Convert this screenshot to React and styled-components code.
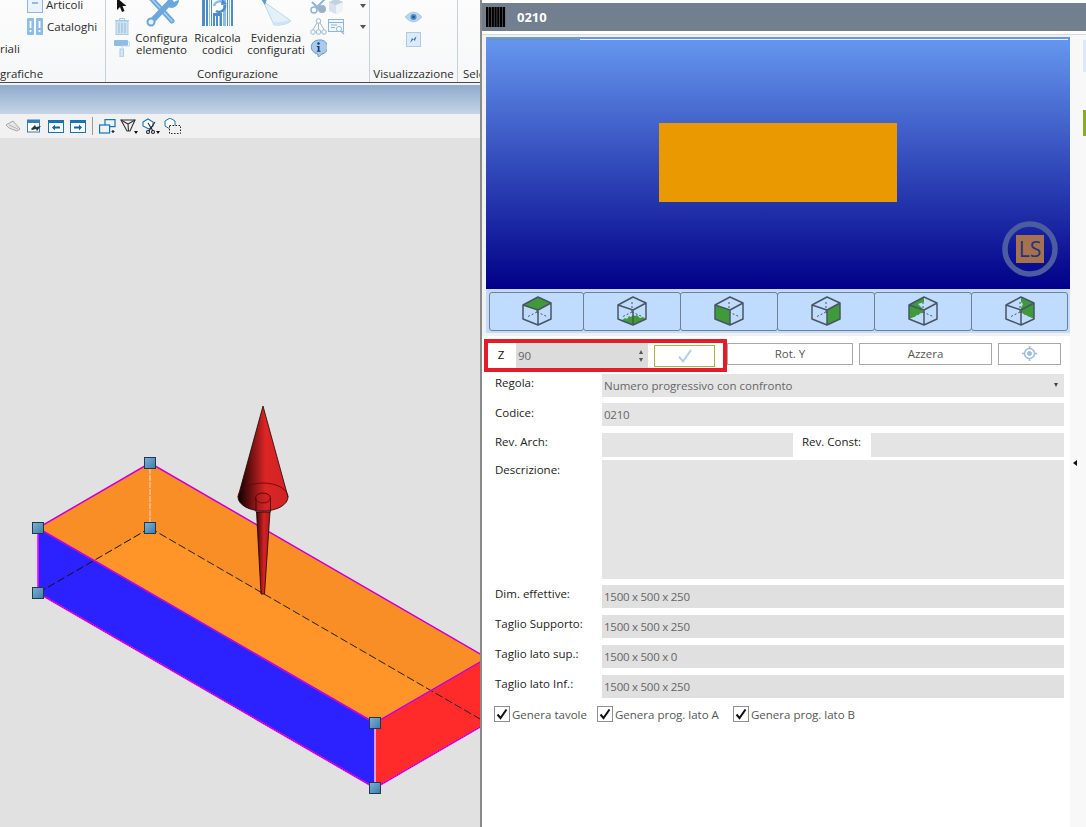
import React from "react";
import styled, { createGlobalStyle } from "styled-components";

const Global = createGlobalStyle`
  html, body { margin: 0; padding: 0; background: #fff; }
  body { font-family: "Open Sans", "Noto Sans", sans-serif; font-size: 11.5px; color: #222; }
  * { box-sizing: border-box; }
`;

const Page = styled.div`
  display: flex; width: 1086px; height: 827px; overflow: hidden; background: #fff;
`;
const LeftPane = styled.div`
  width: 480px; flex: none; display: flex; flex-direction: column; overflow: hidden;
`;
const Ribbon = styled.div`
  height: 83px; flex: none; display: flex; overflow: hidden;
  background: linear-gradient(#fcfcfc, #f6f7f8);
  border-bottom: 1px solid #4a4a4a;
`;
const Group = styled.div`
  width: ${p => p.$w}px; flex: none; display: flex; flex-direction: column;
  border-right: ${p => (p.$last ? "none" : "1px solid #c9d0d8")};
  overflow: hidden; height: 82px;
`;
const GroupBody = styled.div`
  height: 64px; display: flex; gap: ${p => p.$gap || 0}px; padding-left: ${p => p.$pl || 0}px;
  margin-top: ${p => p.$mt || 0}px; flex: none;
`;
const GroupLabel = styled.div`
  margin-top: auto; height: 16px; line-height: 16px;
  text-align: ${p => p.$align || "center"}; padding-left: ${p => p.$pl || 0}px; white-space: nowrap;
  color: #2b2b2b;
`;
const CutColumn = styled.div`
  width: 27px; flex: none; padding-top: 44px; line-height: 22px; color: #2b2b2b;
`;
const ListColumn = styled.div`display: flex; flex-direction: column;`;
const ListItem = styled.div`
  height: 21.5px; display: flex; align-items: center; gap: 3px; color: #2b2b2b; white-space: nowrap;
`;
const SmallColumn = styled.div`
  width: 18px; flex: none; display: flex; flex-direction: column; align-items: center;
`;
const SmallCell = styled.div`
  height: 21.5px; display: flex; align-items: center; justify-content: center;
`;
const LargeButton = styled.div`
  width: ${p => p.$w}px; flex: none; display: flex; flex-direction: column; align-items: center;
  color: #2b2b2b; line-height: 12px; text-align: center; white-space: nowrap;
`;
const LargeIcon = styled.div`height: 37px; flex: none;`;
const SmallGrid = styled.div`
  display: grid; grid-template-columns: 18px 18px 24px; grid-auto-rows: 21px; align-items: center; justify-items: center;
`;
const Caret = styled.span`
  width: 0; height: 0; border-left: 3.5px solid transparent; border-right: 3.5px solid transparent;
  border-top: 4px solid #555; justify-self: end; margin-right: 3px;
`;
const ViewColumn = styled.div`
  width: 100%; display: flex; flex-direction: column; align-items: center; gap: 9px; padding-top: 11px;
`;
const Band = styled.div`
  height: 31px; flex: none; background: linear-gradient(#8fabcc, #c4d5e7); border-top: 2px solid #eef2f6;
`;
const Toolbar = styled.div`
  height: 24px; flex: none; background: #f1f1f1; display: flex; align-items: center; gap: 6px; padding-left: 5px;
`;
const ToolGroup = styled.div`display: flex; align-items: center; gap: 4px;`;
const ToolSep = styled.div`width: 1px; height: 18px; background: #9a9a9a;`;
const Canvas = styled.div`
  flex: 1; background: #e1e1e1; overflow: hidden; position: relative;
`;
const CanvasSvg = styled.svg`display: block;`;

const RightPane = styled.div`
  flex: 1; display: flex; flex-direction: column; border-left: 2px solid #8a8a8a; background: #fff; min-width: 0;
`;
const TitleBar = styled.div`
  margin-top: 3px; height: 28px; flex: none; background: #727f8e; display: flex; align-items: center;
  gap: 11px; padding-left: 4px; color: #fff; font-weight: 700; font-size: 13px;
`;
const PaneBody = styled.div`
  flex: 1; display: flex; border-top: 1px solid #d9d9d9; margin-top: 3px; min-height: 0;
`;
const MainColumn = styled.div`
  width: 588px; flex: none; display: flex; flex-direction: column;
`;
const ViewerWrap = styled.div`
  background: #f1f1f1; padding: 2px 0 3px 4px;
`;
const Viewer = styled.div`
  position: relative; height: 252px; width: 584px;
  background: linear-gradient(#6698ef, #000088);
  display: flex; align-items: center; justify-content: center;
`;
const ViewerLine = styled.div`
  position: absolute; left: 1px; right: 2px; top: 2px; height: 1px;
  background: linear-gradient(90deg, #6f9a8c 0, #6f9a8c 16%, #eef4ff 16%, #eef4ff 100%);
`;
const Slab = styled.div`
  width: 238px; height: 79px; background: #ea9a00; transform: translateY(-1px);
`;
const LogoSvg = styled.svg`
  position: absolute; right: 12px; bottom: 12px;
`;
const CubeStrip = styled.div`
  background: #c3dcfb; height: 44px; width: 584px; display: flex; align-items: center; padding: 0 0 0 4px; margin-top: -5px;
`;
const CubeButton = styled.div`
  width: ${p => p.$w}px; height: 39px; flex: none; background: #bfdcff; border: 1px solid #6f7f95; border-radius: 3px;
  display: flex; align-items: center; justify-content: center; margin-left: -1px;
`;
const FormArea = styled.div`
  display: flex; flex-direction: column; padding-top: 3px;
`;
const ActionRow = styled.div`
  display: flex; height: 33px; align-items: center; margin-bottom: 2px; padding-left: 2px;
`;
const Highlight = styled.div`
  width: 243px; height: 33px; flex: none; border: 4px solid #e31b2b; display: flex; align-items: center; background: #fff;
`;
const AxisName = styled.div`width: 26px; flex: none; text-align: center; color: #111; transform: translateY(-1px); margin-right: 2px;`;
const SpinField = styled.div`
  width: 132px; height: 25px; flex: none; background: #dcdcdc; display: flex; align-items: center; justify-content: space-between;
  padding: 0 5px 0 2px; color: #666;
`;
const SpinArrows = styled.div`display: flex; flex-direction: column; gap: 4px;`;
const SpinUp = styled.span`
  display: block; width: 0; height: 0; border-left: 2.5px solid transparent; border-right: 2.5px solid transparent; border-bottom: 4px solid #555;
`;
const SpinDown = styled(SpinUp)`border-bottom: none; border-top: 4px solid #555;`;
const ApplyButton = styled.div`
  width: 61px; height: 22px; margin-left: 6px; flex: none; background: #fff; border: 1px solid #a8b44a; display: flex; align-items: center; justify-content: center;
`;
const PlainButton = styled.div`
  width: ${p => p.$w}px; margin-left: ${p => p.$ml || 0}px; height: 22px; flex: none; background: #fff; border: 1px solid #a9a9a9;
  display: flex; align-items: center; justify-content: center; color: #555; transform: translateY(-2px);
`;
const Row = styled.div`
  display: grid; grid-template-columns: 107px 1fr; padding: 0 6px 0 13px; margin-bottom: ${p => p.$mb ?? 7}px;
`;
const Label = styled.div`line-height: 18px; color: #222; white-space: nowrap; padding-top: ${p => p.$pt || 0}px;`;
const Field = styled.div`
  height: ${p => p.$h || 23}px; background: ${p => p.$bg || "#e4e4e4"}; color: #666; padding: 0 6px 1px 2px;
  width: ${p => (p.$w ? p.$w + "px" : "auto")}; flex: ${p => (p.$w ? "none" : "1")};
  letter-spacing: ${p => p.$tight ? "-0.25px" : "0"};
  display: flex; justify-content: space-between; align-items: center;
`;
const SelectCaret = styled.span`
  width: 0; height: 0; border-left: 2.5px solid transparent; border-right: 2.5px solid transparent; border-top: 4px solid #444;
`;
const RevCells = styled.div`display: flex;`;
const RevLabel = styled.div`width: 78px; flex: none; padding-left: 9px; line-height: 18px; white-space: nowrap;`;
const Checks = styled.div`display: flex; padding: 1px 0 0 12px;`;
const CheckItem = styled.div`
  display: flex; align-items: center; gap: 2px; color: #555; width: ${p => p.$w}px; flex: none; white-space: nowrap;
`;
const CheckBox = styled.div`
  width: 16px; height: 16px; border: 1px solid #8f8f8f; background: #fff; display: flex; align-items: center; justify-content: center; flex: none;
`;
const Rail = styled.div`
  flex: 1; background: #f8f8f8; display: flex; flex-direction: column; align-items: flex-end;
`;
const Accent = styled.div`
  width: 3px; height: ${p => p.$h}px; margin-top: ${p => p.$mt}px; background: ${p => p.$c};
`;
const RailArrow = styled.div`
  align-self: flex-start; margin: ${p => p.$mt}px 0 0 3px; width: 0; height: 0;
  border-top: 3.5px solid transparent; border-bottom: 3.5px solid transparent; border-right: 4px solid #111;
`;

const Barcode = () => (
  <svg width="20" height="20" viewBox="0 0 20 20" fill="#000">
    {[0, 2.8, 5.6, 8.4, 11.2, 14, 16.8].map((x, i) => (
      <rect key={i} x={x} y="0" width="2.300" height="20" />
    ))}
  </svg>
);

const DocIcon = () => (
  <svg width="16" height="16" viewBox="0 0 16 16">
    <rect x=".5" y=".5" width="15" height="15" fill="#eaf3fb" stroke="#8db8dc" />
    <path d="M5 6h6" stroke="#5c93c4" strokeWidth="1.2" />
  </svg>
);
const BooksIcon = () => (
  <svg width="17" height="17" viewBox="0 0 17 17">
    <rect x="0" y="0" width="7" height="17" rx="1" fill="#8dbde6" />
    <rect x="9" y="0" width="7" height="17" rx="1" fill="#8dbde6" />
    <rect x="2.6" y="3" width="1.8" height="7" fill="#fff" /><rect x="11.6" y="3" width="1.8" height="7" fill="#fff" />
    <rect x="2.6" y="12" width="1.8" height="2" fill="#fff" /><rect x="11.6" y="12" width="1.8" height="2" fill="#fff" />
  </svg>
);
const PointerIcon = () => (
  <svg width="12" height="16" viewBox="0 0 12 16"><path d="M1 0v12l3-3 2 5 2.500-1-2-5h4z" fill="#111" /></svg>
);
const TrashIcon = () => (
  <svg width="14" height="17" viewBox="0 0 14 17" fill="none" stroke="#a9cbe6">
    <path d="M0 2.500h14M4.500 2.500v-2h5v2" /><rect x="1" y="3" width="12" height="13.500" fill="#cfe2f2" />
    <path d="M4 5v10M7 5v10M10 5v10" stroke="#8db8dc" />
  </svg>
);
const RollerIcon = () => (
  <svg width="16" height="17" viewBox="0 0 16 17">
    <rect x="0" y="0" width="14" height="6" rx="1" fill="#8dbde6" />
    <path d="M14 2h1.500v4H8v2" fill="none" stroke="#c5d9ea" />
    <rect x="6" y="9" width="3.500" height="8" fill="#d6e6f3" stroke="#a9cbe6" />
  </svg>
);
const ToolsIcon = () => (
  <svg width="34" height="32" viewBox="0 0 34 32" fill="none" strokeLinecap="round">
    <path d="M4 1l23 25" stroke="#6aa7dc" strokeWidth="5" />
    <path d="M4 1l23 25" stroke="#a9cdec" strokeWidth="1.500" />
    <path d="M26 6L6 27" stroke="#6aa7dc" strokeWidth="5.500" />
    <circle cx="6" cy="27" r="3.500" fill="#eaf3fb" stroke="#6aa7dc" strokeWidth="2" />
    <path d="M33 3a7 7 0 0 1-9 9l-2-4 3-6 3-2" fill="#6aa7dc" stroke="#6aa7dc" />
    <path d="M29 -1l-3 4 3 4 4-2" fill="#fff" stroke="none" />
  </svg>
);
const RecalcIcon = () => (
  <svg width="31" height="32" viewBox="0 0 31 32">
    {[[0, 3, "#4d8ccb"], [4, 2, "#4d8ccb"], [7, 1, "#8dbde6"], [9, 1, "#4d8ccb"], [21, 3, "#8dbde6"], [25, 1, "#4d8ccb"], [27, 1, "#8dbde6"], [29, 2, "#4d8ccb"]].map(([x, w, c], i) => (
      <rect key={i} x={x} y="0" width={w} height="31" fill={c} />
    ))}
    <rect x="11" y="18" width="9" height="13" fill="#4d8ccb" />
    <rect x="13" y="21" width="1" height="10" fill="#fff" /><rect x="16" y="21" width="1.500" height="10" fill="#fff" />
    <path d="M12 11a6 6 0 0 1 10-3" fill="none" stroke="#8dbde6" strokeWidth="2.500" />
    <path d="M23 10a6 6 0 0 1-9 6" fill="none" stroke="#4d8ccb" strokeWidth="2.500" />
    <path d="M20 4l5 5-6 1z" fill="#4d8ccb" />
  </svg>
);
const BeamIcon = () => (
  <svg width="36" height="32" viewBox="0 0 36 32">
    <path d="M5 6L33 26q-6 5-17 4z" fill="#e4f0f9" stroke="#bcd7ec" />
    <path d="M16 30q10 1 17-4l-1-2q-7 4-16 3z" fill="#cfe3f3" />
    <path d="M3 4h6L7 10z" fill="#5c9ad2" />
  </svg>
);
const ScissorsIcon = () => (
  <svg width="18" height="16" viewBox="0 0 18 16" fill="none">
    <circle cx="5" cy="12" r="3" stroke="#8fb4d4" strokeWidth="1.500" />
    <circle cx="13" cy="11" r="4" fill="#9ab3c9" />
    <path d="M7 10l9-9M3 4l7 7" stroke="#8fb4d4" strokeWidth="2" />
  </svg>
);
const GrayCubeIcon = () => (
  <svg width="16" height="16" viewBox="0 0 16 16">
    <path d="M1 4l7-3 7 3v9l-7 3-7-3z" fill="#d7e2ec" /><path d="M8 7l7-3v9l-7 3z" fill="#eef3f8" /><path d="M1 4l7 3 7-3-7-3z" fill="#c0d1e0" />
  </svg>
);
const TreeIcon = () => (
  <svg width="17" height="17" viewBox="0 0 17 17" fill="none" stroke="#9db8cf">
    <circle cx="8.500" cy="3" r="2.300" /><circle cx="3" cy="14" r="2.300" /><circle cx="8.500" cy="14" r="2.300" /><circle cx="14" cy="14" r="2.300" />
    <path d="M8.500 5.500V11.500M7 5L3 11.500M10 5l4 6.500" />
  </svg>
);
const DocSearchIcon = () => (
  <svg width="17" height="17" viewBox="0 0 17 17" fill="none" stroke="#8db8dc">
    <rect x=".5" y="1.500" width="15" height="12" fill="#f1f6fb" /><path d="M.5 4.500h15" />
    <path d="M3 7h6M3 9.500h4" /><circle cx="11" cy="11" r="2.500" fill="#fff" /><path d="M13 13l3 3" strokeWidth="1.500" />
  </svg>
);
const InfoIcon = () => (
  <svg width="17" height="18" viewBox="0 0 17 18">
    <path d="M8.500 1a7.500 7 0 0 1 3 14.300L8.500 18l-1-3.100A7.500 7 0 0 1 8.500 1z" fill="#a9cbe9" stroke="#6b9ccb" />
    <circle cx="8.500" cy="4.500" r="1.200" fill="#123a73" /><path d="M6.800 7h2.700v4.800h1v1H6.800v-1h1V8H6.800z" fill="#123a73" />
  </svg>
);
const EyeIcon = () => (
  <svg width="17" height="12" viewBox="0 0 17 12">
    <path d="M0 6q8.500-10 17 0q-8.500 10-17 0z" fill="#b8d6ee" stroke="#8db8dc" strokeWidth=".5" />
    <circle cx="8.500" cy="6" r="3" fill="#4d8ccb" /><circle cx="8.500" cy="6" r="1.200" fill="#17508e" />
  </svg>
);
const FrameIcon = () => (
  <svg width="15" height="15" viewBox="0 0 15 15">
    <rect x=".5" y=".5" width="14" height="14" fill="#dcebf7" stroke="#a9cbe6" />
    <path d="M10.500 4L4 11l2-5 3 3z" fill="#3e76ad" />
  </svg>
);

const PlaneTool = () => (
  <svg width="16" height="12" viewBox="0 0 16 12">
    <path d="M1 5l7-4 7 8-3 2-8-3z" fill="#e6e6e6" stroke="#a8a8a8" /><path d="M4 5l9 4" stroke="#b5b5b5" />
  </svg>
);
const WindowTool = () => (
  <svg width="15" height="15" viewBox="0 0 15 15">
    <rect x=".5" y="1" width="12" height="12" fill="#fff" stroke="#2f7fc1" /><rect x=".5" y="1" width="12" height="3" fill="#2f7fc1" />
    <path d="M4 10l4-4 1 2 5-1-4 5-1-2-4 1z" fill="#333" />
  </svg>
);
const ArrowTool = ({ right }) => (
  <svg width="16" height="13" viewBox="0 0 16 13">
    <rect x=".5" y=".5" width="15" height="12" fill="#fff" stroke="#1573b8" /><rect x="1" y="1" width="14" height="2" fill="#1573b8" />
    <path d={right ? "M4 6.500h5V4.500l3 3-3 3V8.500H4z" : "M12 6.500H7V4.500l-3 3 3 3V8.500h5z"} fill="#14639e" />
  </svg>
);
const WindowsTool = () => (
  <svg width="17" height="15" viewBox="0 0 17 15" fill="none" stroke="#1573b8" strokeWidth="1.200">
    <rect x="6" y=".6" width="10" height="7" fill="#f1f1f1" /><rect x=".6" y="6" width="10" height="8" fill="#f1f1f1" />
    <path d="M14 11v3M12.500 12.500h3" stroke="#222" />
  </svg>
);
const FunnelTool = () => (
  <svg width="18" height="17" viewBox="0 0 18 17" fill="none" stroke="#333" strokeWidth="1.100">
    <path d="M1 2l14 0-5 11-3 0z" /><path d="M1 2l7 4 7-4M8 6l.5 7" />
    <path d="M14 13h4l-2 3z" fill="#111" stroke="none" />
  </svg>
);
const CutTool = () => (
  <svg width="18" height="17" viewBox="0 0 18 17" fill="none" stroke="#1573b8" strokeWidth="1.100">
    <path d="M1 4l5-3 5 3v4l-4 3-6-3z" fill="#fff" />
    <path d="M6 5l5 8M13 4l-6 9" stroke="#222" /><circle cx="6" cy="14" r="1.500" stroke="#222" /><circle cx="11" cy="14" r="1.500" stroke="#222" />
    <path d="M14 13h4l-2 3z" fill="#111" stroke="none" />
  </svg>
);
const SelectTool = () => (
  <svg width="17" height="16" viewBox="0 0 17 16" fill="none">
    <path d="M1 3l5-3 5 3v5l-5 3-5-3z" fill="#fff" stroke="#1573b8" />
    <rect x="5.500" y="7.500" width="11" height="8" fill="#f1f1f1" stroke="#222" strokeDasharray="1.500 1.500" />
  </svg>
);

const CUBE_FACES = {
  top: "M0 8L15 0L28 6L15 13Z",
  bottom: "M3 24L7 21L9 22L11 19L13 20L15 18L17 19L19 18L22 21L25 20L28 22L15 28Z",
  front: "M0 8L15 13V28L0 22Z",
  right: "M15 13L28 6V22L15 28Z",
  back: "M0 8L15 0V5L9 7L13 11L14 15L8 18L5 20L0 22Z",
  rear: "M15 0L28 6V22L22 19L18 17L14 15L15 11L17 7L15 5Z",
};
const Cube = ({ face }) => (
  <svg width="30" height="30" viewBox="-1 -1 30 30" fill="none">
    <path d="M14 15V4M14 15L4 20M14 15l11 5" stroke="#4a5563" strokeDasharray="2 2" />
    <path d={CUBE_FACES[face]} fill="#3f9a3a" />
    <path d="M0 8L15 0L28 6V22L15 28L0 22ZM0 8L15 13L28 6M15 13V28" stroke="#4a5563" strokeWidth="1.500" strokeLinejoin="round" />
  </svg>
);

const Check = ({ color = "#111", w = 12, sw = 2 }) => (
  <svg width={w} height={w} viewBox="0 0 12 12" fill="none">
    <path d="M1.500 6.500l3 3.500 6-8.500" stroke={color} strokeWidth={sw} />
  </svg>
);
const Target = () => (
  <svg width="15" height="15" viewBox="0 0 15 15" fill="none" stroke="#9dbde0">
    <circle cx="7.500" cy="7.500" r="5" strokeWidth="1.500" /><circle cx="7.500" cy="7.500" r="2" fill="#9dbde0" />
    <path d="M7.500 0v3M7.500 12v3M0 7.500h3M12 7.500h3" strokeWidth="1.500" />
  </svg>
);

const Handle = ({ x, y }) => (
  <rect x={x - 5.500} y={y - 5.500} width="11" height="11" fill="url(#handle)" stroke="#1f3a48" />
);

const Scene = () => (
  <CanvasSvg width="480" height="689" viewBox="0 138 480 689">
    <defs>
      <linearGradient id="handle" x1="0" y1="0" x2="1" y2="1"><stop offset="0" stopColor="#7fb2d8" /><stop offset="1" stopColor="#3d7ba8" /></linearGradient>
      <linearGradient id="cone" x1="0" y1="0" x2="1" y2="0"><stop offset="0" stopColor="#0a0202" /><stop offset=".25" stopColor="#6a1010" /><stop offset=".55" stopColor="#dd2525" /><stop offset="1" stopColor="#cf2323" /></linearGradient>
      <linearGradient id="stem" x1="0" y1="0" x2="1" y2="0"><stop offset="0" stopColor="#400808" /><stop offset=".55" stopColor="#d42222" /><stop offset="1" stopColor="#a81a1a" /></linearGradient>
    </defs>
    <path d="M150 463L38 528L375 723L487 658Z" fill="#f98e27" />
    <path d="M150 528L93 560L375 723L431 691Z" fill="#ff9428" />
    <path d="M38 528L375 723V788L38 593Z" fill="#2c22ff" />
    <path d="M375 723L487 658V723L375 788Z" fill="#ff2b2b" />
    <path d="M150 468V525" stroke="#ffb27a" strokeWidth="2" strokeDasharray="6 1" />
    <path d="M150 528L38 593" stroke="#111" strokeDasharray="8 3" />
    <path d="M150 528L487 723" stroke="#222" strokeDasharray="8 3" />
    <path d="M38 528L150 463L487 658L375 723L38 528ZM38 528V593L375 788L487 723" fill="none" stroke="#f0f" strokeWidth="1.600" />
    <path d="M38 528L150 463L487 658L375 723Z" fill="none" stroke="#50205a" strokeWidth=".5" />
    <path d="M38 593L375 788L487 723" fill="none" stroke="#401040" strokeWidth=".8" strokeDasharray="1 1.500" />
    <path d="M375 723V788" stroke="#ffb0ff" strokeWidth="1.600" />
    <path d="M263 406L238 497A25 14 0 0 0 288 497Z" fill="url(#cone)" stroke="#200" strokeWidth=".8" />
    <path d="M238 497A25 14 0 0 1 288 497" fill="none" stroke="#600" strokeWidth=".8" />
    <ellipse cx="263" cy="498" rx="7.500" ry="5" fill="#b82020" fillOpacity=".4" stroke="#400" strokeWidth=".8" />
    <path d="M256 498V512H270.500V498" fill="#b82020" fillOpacity=".25" stroke="#300" strokeWidth=".8" />
    <path d="M256.500 512L261 594H264.500L270 512Z" fill="url(#stem)" stroke="#200" strokeWidth=".8" />
    <Handle x={150} y={463} /><Handle x={38} y={528} /><Handle x={150} y={528} />
    <Handle x={38} y={593} /><Handle x={375} y={723} /><Handle x={375} y={788} />
  </CanvasSvg>
);

const Logo = () => (
  <LogoSvg width="56" height="56" viewBox="0 0 56 56">
    <circle cx="28" cy="28" r="25" fill="none" stroke="#4c5ca0" strokeWidth="5.500" />
    <rect x="14" y="14" width="28" height="28" fill="#a5714e" />
    <text x="28" y="36" textAnchor="middle" fontFamily="Open Sans, sans-serif" fontSize="21" fill="#22347e">LS</text>
  </LogoSvg>
);

export default function App() {
  return (
    <>
      <Global />
      <Page>
        <LeftPane>
          <Ribbon>
            <Group $w={106}>
              <GroupBody $mt={-6}>
                <CutColumn>riali</CutColumn>
                <ListColumn>
                  <ListItem><DocIcon />Articoli</ListItem>
                  <ListItem><BooksIcon />Cataloghi</ListItem>
                </ListColumn>
              </GroupBody>
              <GroupLabel $align="left">grafiche</GroupLabel>
            </Group>
            <Group $w={264}>
              <GroupBody $mt={-5} $pl={7}>
                <SmallColumn>
                  <SmallCell><PointerIcon /></SmallCell>
                  <SmallCell><TrashIcon /></SmallCell>
                  <SmallCell><RollerIcon /></SmallCell>
                </SmallColumn>
                <LargeButton $w={61}>
                  <LargeIcon><ToolsIcon /></LargeIcon>
                  Configura<br />elemento
                </LargeButton>
                <LargeButton $w={51}>
                  <LargeIcon><RecalcIcon /></LargeIcon>
                  Ricalcola<br />codici
                </LargeButton>
                <LargeButton $w={66}>
                  <LargeIcon><BeamIcon /></LargeIcon>
                  Evidenzia<br />configurati
                </LargeButton>
                <SmallGrid>
                  <ScissorsIcon /><GrayCubeIcon /><Caret />
                  <TreeIcon /><DocSearchIcon /><Caret />
                  <InfoIcon />
                </SmallGrid>
              </GroupBody>
              <GroupLabel>Configurazione</GroupLabel>
            </Group>
            <Group $w={88}>
              <GroupBody><ViewColumn><EyeIcon /><FrameIcon /></ViewColumn></GroupBody>
              <GroupLabel>Visualizzazione</GroupLabel>
            </Group>
            <Group $w={23} $last>
              <GroupBody />
              <GroupLabel $align="left" $pl={5}>Sele</GroupLabel>
            </Group>
          </Ribbon>
          <Band />
          <Toolbar>
            <PlaneTool /><WindowTool /><ArrowTool /><ArrowTool right /><ToolSep />
            <ToolGroup><WindowsTool /><FunnelTool /><CutTool /><SelectTool /></ToolGroup>
          </Toolbar>
          <Canvas><Scene /></Canvas>
        </LeftPane>
        <RightPane>
          <TitleBar><Barcode />0210</TitleBar>
          <PaneBody>
            <MainColumn>
              <ViewerWrap>
                <Viewer>
                  <ViewerLine />
                  <Slab />
                  <Logo />
                </Viewer>
              </ViewerWrap>
              <ViewerWrap>
                <CubeStrip>
                  <CubeButton $w={95}><Cube face="top" /></CubeButton>
                  <CubeButton $w={98}><Cube face="bottom" /></CubeButton>
                  <CubeButton $w={98}><Cube face="front" /></CubeButton>
                  <CubeButton $w={98}><Cube face="right" /></CubeButton>
                  <CubeButton $w={98}><Cube face="back" /></CubeButton>
                  <CubeButton $w={97}><Cube face="rear" /></CubeButton>
                </CubeStrip>
              </ViewerWrap>
              <FormArea>
                <ActionRow>
                  <Highlight>
                    <AxisName>Z</AxisName>
                    <SpinField>90<SpinArrows><SpinUp /><SpinDown /></SpinArrows></SpinField>
                    <ApplyButton><Check color="#b4cbe6" w={16} sw={1.500} /></ApplyButton>
                  </Highlight>
                  <PlainButton $w={126}>Rot. Y</PlainButton>
                  <PlainButton $w={133} $ml={6}>Azzera</PlainButton>
                  <PlainButton $w={63} $ml={6}><Target /></PlainButton>
                </ActionRow>
                <Row $mb={6}><Label>Regola:</Label><Field>Numero progressivo con confronto<SelectCaret /></Field></Row>
                <Row><Label $pt={1}>Codice:</Label><Field $tight>0210</Field></Row>
                <Row $mb={3}>
                  <Label>Rev. Arch:</Label>
                  <RevCells><Field $w={191} $h={24} /><RevLabel>Rev. Const:</RevLabel><Field $h={24} /></RevCells>
                </Row>
                <Row $mb={6}><Label $pt={1}>Descrizione:</Label><Field $h={119} /></Row>
                <Row><Label>Dim. effettive:</Label><Field $tight $bg="#e0e0e0">1500 x 500 x 250</Field></Row>
                <Row><Label>Taglio Supporto:</Label><Field $tight $bg="#e0e0e0">1500 x 500 x 250</Field></Row>
                <Row><Label>Taglio lato sup.:</Label><Field $tight $bg="#e0e0e0">1500 x 500 x 0</Field></Row>
                <Row><Label>Taglio lato Inf.:</Label><Field $tight $bg="#e0e0e0">1500 x 500 x 250</Field></Row>
                <Checks>
                  <CheckItem $w={103}><CheckBox><Check /></CheckBox>Genera tavole</CheckItem>
                  <CheckItem $w={136}><CheckBox><Check /></CheckBox>Genera prog. lato A</CheckItem>
                  <CheckItem $w={125}><CheckBox><Check /></CheckBox>Genera prog. lato B</CheckItem>
                </Checks>
              </FormArea>
            </MainColumn>
            <Rail>
              <Accent $mt={5} $h={32} $c="#dde8fb" />
              <Accent $mt={38} $h={26} $c="#8aac20" />
              <RailArrow $mt={324} />
            </Rail>
          </PaneBody>
        </RightPane>
      </Page>
    </>
  );
}
